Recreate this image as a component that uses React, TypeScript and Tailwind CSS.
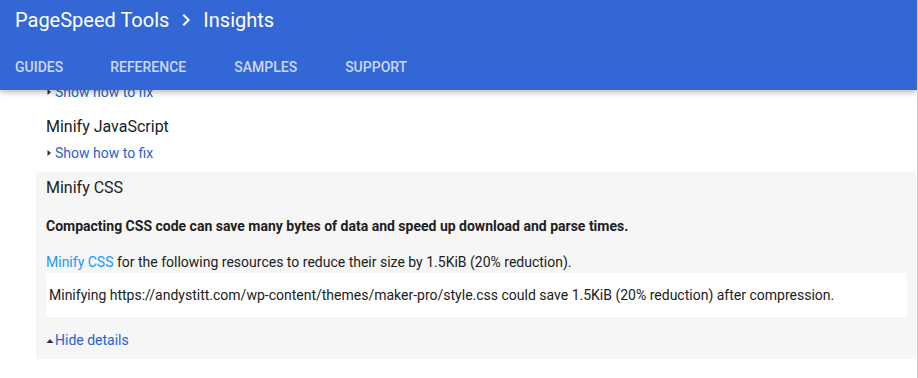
import React from 'react';

const ChevronRight: React.FC<{ className?: string }> = ({ className }) => (
    <svg className={className} viewBox="0 0 24 24" fill="currentColor">
        <path d="M8.59 16.59 13.17 12 8.59 7.41 10 6l6 6-6 6z" />
    </svg>
);

const tabs = [
    { label: 'GUIDES', className: 'mr-[47px]' },
    { label: 'REFERENCE', className: 'mr-[48px]' },
    { label: 'SAMPLES', className: 'mr-[48px]' },
    { label: 'SUPPORT', className: '' },
];

const ShowLink: React.FC<{ label: string; open?: boolean }> = ({ label, open }) => (
    <div className="flex items-center h-5 mt-[6px] text-[14px] text-[#2a62d0]">
        {open ? (
            <svg className="w-[9px] h-[5px] text-[#333]" viewBox="0 0 9 5" fill="currentColor">
                <path d="M0.5 5 4 1 7.5 5z" />
            </svg>
        ) : (
            <svg className="w-[9px] h-[8px] text-[#333]" viewBox="0 0 9 8" fill="currentColor">
                <path d="M1.5 1 5 4 1.5 7z" />
            </svg>
        )}
        <span>{label}</span>
    </div>
);

const App: React.FC = () => {
    return (
        <div className="relative w-[918px] h-[378px] overflow-hidden bg-white border-r border-[#cfcfcf]" style={{ fontFamily: 'Roboto, "Noto Sans", sans-serif' }}>
            <header className="absolute top-0 left-0 right-0 z-10 h-[90px] bg-[#3367d6] text-white shadow-[0_2px_6px_rgba(0,0,0,0.3)]">
                <div className="flex items-center h-10 pl-[15px] text-[20px]">
                    <span>PageSpeed Tools</span>
                    <ChevronRight className="w-6 h-6 mx-[5px]" />
                    <span>Insights</span>
                </div>
                <nav className="flex items-center h-[54px] pl-[15px] text-[14px] font-medium text-white/75">
                    {tabs.map(tab => (
                        <span key={tab.label} className={tab.className}>{tab.label}</span>
                    ))}
                </nav>
            </header>

            <main className="pl-[36px] pr-px pt-[50px]">
                <div className="px-[10px] pt-[6px] pb-[9px]">
                    <h3 className="h-5 leading-5 text-[16px] text-[#212121]">Minify HTML</h3>
                    <ShowLink label="Show how to fix" />
                </div>
                <div className="px-[10px] pt-[6px] pb-[9px]">
                    <h3 className="h-5 leading-5 text-[16px] text-[#212121]">Minify JavaScript</h3>
                    <ShowLink label="Show how to fix" />
                </div>
                <div className="bg-[#f6f6f6] px-[10px] pt-[6px] pb-[9px]">
                    <h3 className="h-5 leading-5 text-[16px] text-[#212121]">Minify CSS</h3>
                    <p className="mt-[18px] h-5 leading-5 text-[14px] font-bold text-[#212121]">
                        Compacting CSS code can save many bytes of data and speed up download and parse times.
                    </p>
                    <p className="mt-4 h-5 leading-5 text-[14px] text-[#212121]">
                        <span className="text-[#2196f3]">Minify CSS</span> for the following resources to reduce their size by 1.5KiB (20% reduction).
                    </p>
                    <div className="mt-px mr-[-1px] bg-white h-[44px] flex items-center px-[3px] text-[14px] text-[#212121]">
                        Minifying https://andystitt.com/wp-content/themes/maker-pro/style.css could save 1.5KiB (20% reduction) after compression.
                    </div>
                    <div className="mt-[13px]">
                        <ShowLink label="Hide details" open />
                    </div>
                </div>
            </main>
        </div>
    );
};

export default App;
